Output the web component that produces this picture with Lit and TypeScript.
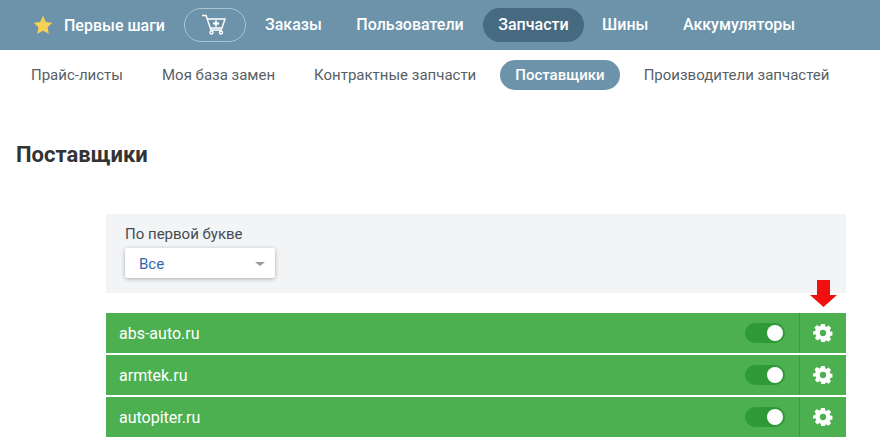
import { LitElement, html, css, svg } from "lit";
import { customElement } from "lit/decorators.js";

const gear = svg`<path fill="#fff" fill-rule="evenodd" d="M8 0h4l.5 2.6 1.500.6 2.200-1.500 2.800 2.800-1.500 2.200.6 1.500 2.400.5v4l-2.400.5-.6 1.500 1.500 2.200-2.800 2.800-2.200-1.500-1.500.6L12 20H8l-.5-2.600-1.500-.6-2.200 1.500-2.800-2.800 1.500-2.200-.6-1.500L-1 11.800V8.200l2.400-.5.6-1.500-1.500-2.200 2.800-2.800L5.500 2.700l1.500-.5zM10 6.500a3.500 3.500 0 1 0 0 7 3.500 3.500 0 0 0 0-7z"/>`;

@customElement("app-root")
export class AppRoot extends LitElement {
  static styles = css`
    :host { display: block; height: 439px; overflow: hidden; background: #fff; font-family: Roboto, sans-serif; }
    .top { height: 50px; background: #6c93aa; display: flex; align-items: center; padding-left: 33px; color: #fff; font-size: 16px; font-weight: 500; box-sizing: border-box; }
    .star { width: 20px; height: 20px; margin-right: 11px; }
    .first { margin-right: 19px; }
    .cart { width: 62px; height: 34px; box-sizing: border-box; border: 1px solid #a9c4d3; border-radius: 17px; display: flex; align-items: center; justify-content: center; margin-right: 19px; }
    .cart svg { width: 26px; height: 28px; }
    .item { line-height: 34px; margin-right: 34.5px; }
    .item.active { background: #466a80; border-radius: 17px; padding: 0 15px 0 15px; margin: 0 18.5px 0 -15px; }
    .sub { height: 50px; display: flex; align-items: center; padding-left: 31px; font-size: 15px; color: #575f66; }
    .sub a { margin-right: 39px; }
    .sub a.active { background: #6c93aa; color: #fff; font-weight: 500; line-height: 30px; border-radius: 15px; padding: 0 15px; margin: 0 24px 0 -15px; }
    h1 { margin: 0; padding: 43px 0 0 16px; font-size: 22px; line-height: 24px; font-weight: 700; color: #333; height: 71px; box-sizing: content-box; }
    .body { margin: 0 34px 0 106px; }
    .filter { height: 79px; background: #f3f4f6; padding: 11px 19px 0; box-sizing: border-box; font-size: 15px; color: #444b52; }
    .label { line-height: 18px; margin-bottom: 5px; }
    .select { width: 150px; height: 30px; background: #fff; border-radius: 2px; box-shadow: 0 1px 4px rgba(0,0,0,.3); display: flex; align-items: center; justify-content: space-between; padding: 2px 10px 0 14px; box-sizing: border-box; color: #2f68b0; }
    .caret { width: 0; height: 0; border-left: 5px solid transparent; border-right: 5px solid transparent; border-top: 4px solid #9a9a9a; }
    .rows { position: relative; margin-top: 20px; display: flex; flex-direction: column; gap: 2px; }
    .arrow { position: absolute; right: 9px; top: -33px; width: 27px; height: 27px; }
    .row { height: 40px; background: #4caf50; display: flex; align-items: center; color: #fff; font-size: 16px; padding-left: 13px; }
    .name { flex: 1; }
    .toggle { width: 40px; height: 20px; border-radius: 10px; background: #2e9a35; position: relative; margin-right: 14px; }
    .toggle::after { content: ""; position: absolute; right: 2px; top: 2px; width: 16px; height: 16px; border-radius: 50%; background: #fff; }
    .gear { width: 47px; height: 100%; border-left: 1px solid #3a9a3e; display: flex; align-items: center; justify-content: center; box-sizing: border-box; }
    .gear svg { width: 18px; height: 18px; overflow: visible; }
  `;

  render() {
    const rows = ["abs-auto.ru", "armtek.ru", "autopiter.ru"];
    return html`
      <div class="top">
        <svg class="star" viewBox="0 0 24 24"><path fill="#f7d154" d="M12 1l3.400 7.300 7.800 1-5.700 5.400 1.500 7.900L12 18.800l-7 3.800 1.500-7.900L.8 9.300l7.800-1z"/></svg>
        <span class="first">Первые шаги</span>
        <div class="cart">
          <svg viewBox="0 0 26 28" fill="none" stroke="#fff" stroke-width="1.400">
            <path d="M0 4.500h4L9 19h11"/>
            <path d="M5 8h18l-3 9H9"/>
            <path stroke-width="1.800" d="M14 9.500v6M11 12.500h6"/>
            <circle cx="9.500" cy="21.500" r="1.500"/><circle cx="19" cy="21.500" r="1.500"/>
          </svg>
        </div>
        <span class="item">Заказы</span>
        <span class="item">Пользователи</span>
        <span class="item active">Запчасти</span>
        <span class="item">Шины</span>
        <span class="item">Аккумуляторы</span>
      </div>
      <nav class="sub">
        <a>Прайс-листы</a><a>Моя база замен</a><a>Контрактные запчасти</a><a class="active">Поставщики</a><a>Производители запчастей</a>
      </nav>
      <h1>Поставщики</h1>
      <div class="body">
        <div class="filter">
          <div class="label">По первой букве</div>
          <div class="select"><span>Все</span><i class="caret"></i></div>
        </div>
        <div class="rows">
          <svg class="arrow" viewBox="0 0 27 27"><path fill="#f01010" d="M7 0h13v15h7L13.500 27 0 15h7z"/></svg>
          ${rows.map(r => html`<div class="row"><span class="name">${r}</span><span class="toggle"></span><span class="gear"><svg viewBox="0 0 20 20">${gear}</svg></span></div>`)}
        </div>
      </div>
    `;
  }
}
